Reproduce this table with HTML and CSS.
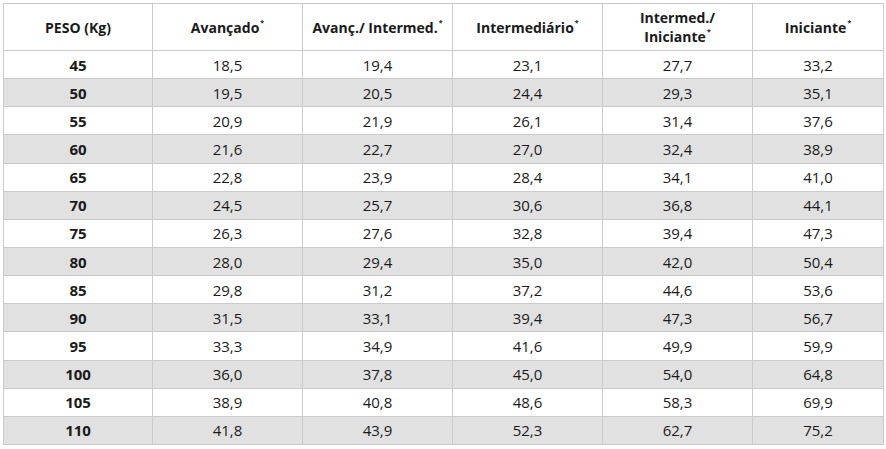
FILE: index.html
```html
<!DOCTYPE html>
<html lang="pt">
<head>
<meta charset="utf-8">
<link rel="stylesheet" href="styles.css">
</head>
<body>
<table class="tabela">
  <colgroup>
    <col class="c1"><col class="c2"><col class="c3"><col class="c4"><col class="c5"><col class="c6">
  </colgroup>
  <thead>
    <tr>
      <th>PESO (Kg)</th>
      <th>Avançado<span class="ast">*</span></th>
      <th>Avanç./ Intermed.<span class="ast">*</span></th>
      <th>Intermediário<span class="ast">*</span></th>
      <th>Intermed./<br>Iniciante<span class="ast">*</span></th>
      <th>Iniciante<span class="ast">*</span></th>
    </tr>
  </thead>
  <tbody>
    <tr><td class="peso">45</td><td>18,5</td><td>19,4</td><td>23,1</td><td>27,7</td><td>33,2</td></tr>
    <tr><td class="peso">50</td><td>19,5</td><td>20,5</td><td>24,4</td><td>29,3</td><td>35,1</td></tr>
    <tr><td class="peso">55</td><td>20,9</td><td>21,9</td><td>26,1</td><td>31,4</td><td>37,6</td></tr>
    <tr><td class="peso">60</td><td>21,6</td><td>22,7</td><td>27,0</td><td>32,4</td><td>38,9</td></tr>
    <tr><td class="peso">65</td><td>22,8</td><td>23,9</td><td>28,4</td><td>34,1</td><td>41,0</td></tr>
    <tr><td class="peso">70</td><td>24,5</td><td>25,7</td><td>30,6</td><td>36,8</td><td>44,1</td></tr>
    <tr><td class="peso">75</td><td>26,3</td><td>27,6</td><td>32,8</td><td>39,4</td><td>47,3</td></tr>
    <tr><td class="peso">80</td><td>28,0</td><td>29,4</td><td>35,0</td><td>42,0</td><td>50,4</td></tr>
    <tr><td class="peso">85</td><td>29,8</td><td>31,2</td><td>37,2</td><td>44,6</td><td>53,6</td></tr>
    <tr><td class="peso">90</td><td>31,5</td><td>33,1</td><td>39,4</td><td>47,3</td><td>56,7</td></tr>
    <tr><td class="peso">95</td><td>33,3</td><td>34,9</td><td>41,6</td><td>49,9</td><td>59,9</td></tr>
    <tr><td class="peso">100</td><td>36,0</td><td>37,8</td><td>45,0</td><td>54,0</td><td>64,8</td></tr>
    <tr><td class="peso">105</td><td>38,9</td><td>40,8</td><td>48,6</td><td>58,3</td><td>69,9</td></tr>
    <tr><td class="peso">110</td><td>41,8</td><td>43,9</td><td>52,3</td><td>62,7</td><td>75,2</td></tr>
  </tbody>
</table>
</body>
</html>
```
FILE: styles.css
```css
html, body {
  margin: 0;
  padding: 0;
  background: #ffffff;
}
body {
  padding: 3px 0 0 3px;
  font-family: "Open Sans", "Noto Sans", sans-serif;
  color: #1a1a1a;
}
.tabela {
  border-collapse: collapse;
  table-layout: fixed;
  width: 880px;
}
.c1 { width: 149px; }
.c2, .c3, .c4, .c5 { width: 150px; }
.c6 { width: 131px; }
.tabela th, .tabela td {
  border: 1px solid #cacaca;
  text-align: center;
  padding: 0;
}
.tabela th {
  height: 46px;
  font-size: 14px;
  font-weight: 700;
  line-height: 19px;
}
.ast {
  display: inline-block;
  font-size: 7px;
  line-height: 7px;
  vertical-align: top;
  margin-left: 1px;
  margin-top: 1px;
}
.tabela td {
  height: 27.15px;
  font-size: 15px;
  line-height: 18px;
}
.tabela td.peso {
  font-weight: 700;
}
.tabela tbody tr:nth-child(even) td {
  background: #e1e1e1;
}
```
